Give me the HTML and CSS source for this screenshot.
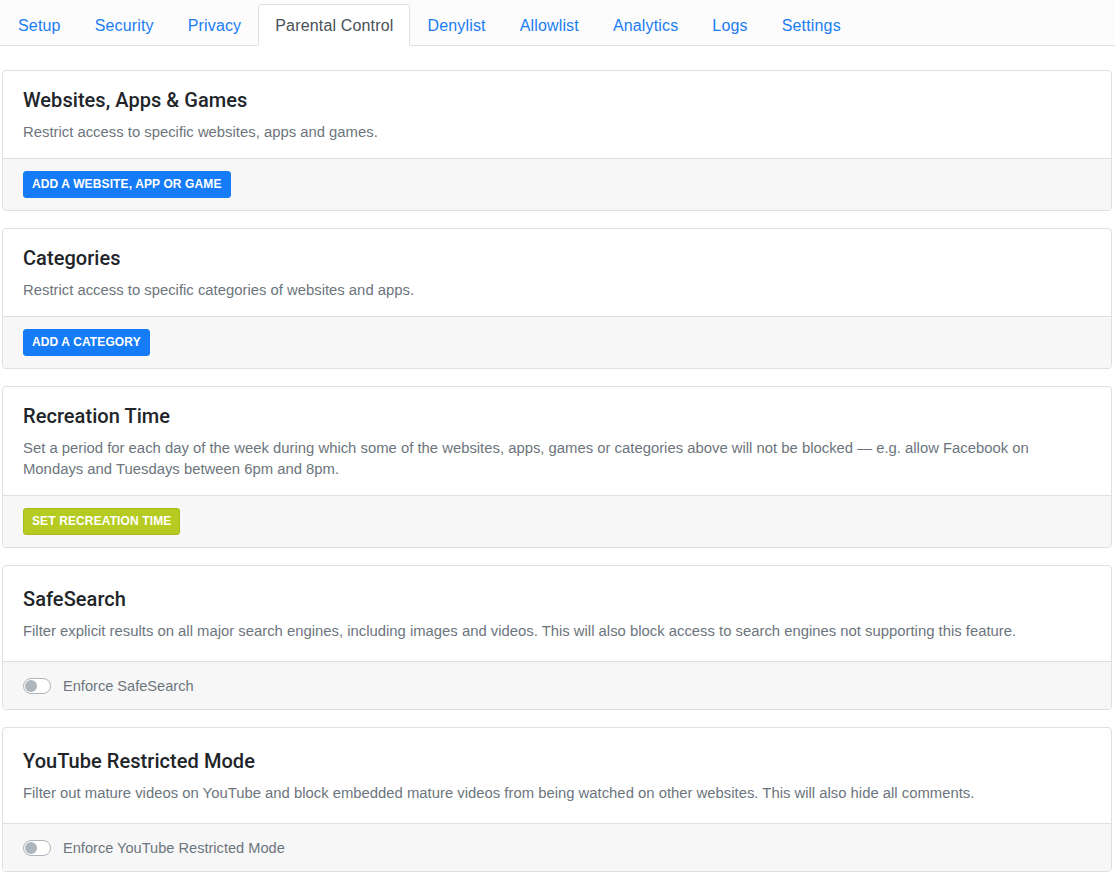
FILE: index.html
```html
<!DOCTYPE html>
<html lang="en">
<head>
<meta charset="utf-8">
<title>Parental Control</title>
<link rel="stylesheet" href="styles.css">
</head>
<body>
<nav class="tabs">
  <a class="tab" href="#">Setup</a>
  <a class="tab" href="#">Security</a>
  <a class="tab" href="#">Privacy</a>
  <a class="tab active" href="#">Parental Control</a>
  <a class="tab" href="#">Denylist</a>
  <a class="tab" href="#">Allowlist</a>
  <a class="tab" href="#">Analytics</a>
  <a class="tab" href="#">Logs</a>
  <a class="tab" href="#">Settings</a>
</nav>
<main class="content">
  <section class="card">
    <div class="card-body">
      <h5 class="card-title">Websites, Apps &amp; Games</h5>
      <p class="card-text">Restrict access to specific websites, apps and games.</p>
    </div>
    <div class="card-footer">
      <button class="btn btn-primary" type="button">Add a website, app or game</button>
    </div>
  </section>
  <section class="card">
    <div class="card-body">
      <h5 class="card-title">Categories</h5>
      <p class="card-text">Restrict access to specific categories of websites and apps.</p>
    </div>
    <div class="card-footer">
      <button class="btn btn-primary" type="button">Add a category</button>
    </div>
  </section>
  <section class="card">
    <div class="card-body">
      <h5 class="card-title">Recreation Time</h5>
      <p class="card-text">Set a period for each day of the week during which some of the websites, apps, games or categories above will not be blocked — e.g. allow Facebook on Mondays and Tuesdays between 6pm and 8pm.</p>
    </div>
    <div class="card-footer">
      <button class="btn btn-lime" type="button">Set recreation time</button>
    </div>
  </section>
  <section class="card">
    <div class="card-body roomy">
      <h5 class="card-title">SafeSearch</h5>
      <p class="card-text">Filter explicit results on all major search engines, including images and videos. This will also block access to search engines not supporting this feature.</p>
    </div>
    <div class="card-footer">
      <label class="switch-row"><span class="switch"></span><span>Enforce SafeSearch</span></label>
    </div>
  </section>
  <section class="card">
    <div class="card-body roomy">
      <h5 class="card-title">YouTube Restricted Mode</h5>
      <p class="card-text">Filter out mature videos on YouTube and block embedded mature videos from being watched on other websites. This will also hide all comments.</p>
    </div>
    <div class="card-footer">
      <label class="switch-row"><span class="switch"></span><span>Enforce YouTube Restricted Mode</span></label>
    </div>
  </section>
</main>
</body>
</html>
```

FILE: styles.css
```css
html, body {
  margin: 0;
  padding: 0;
}

body {
  font-family: "Liberation Sans", Arial, sans-serif;
  color: #212529;
  background: #ffffff;
}

.tabs {
  display: flex;
  padding: 4px 0 0 1px;
  border-bottom: 1px solid #dee2e6;
  background: #fcfcfc;
}

.tab {
  display: block;
  padding: 9px 16px 7px;
  font-size: 16px;
  letter-spacing: 0.16px;
  line-height: 24px;
  color: #1a7cf4;
  text-decoration: none;
  border: 1px solid transparent;
  border-top-left-radius: 4px;
  border-top-right-radius: 4px;
  margin-bottom: -1px;
}

.tab.active {
  color: #495057;
  background: #ffffff;
  border-color: #dee2e6 #dee2e6 #ffffff;
}

.content {
  display: flex;
  flex-direction: column;
  gap: 17px;
  padding: 24px 3px 0 2px;
}

.card {
  border: 1px solid #dfdfdf;
  border-radius: 4px;
  background: #ffffff;
  overflow: hidden;
}

.card-body {
  padding: 17px 20px 15px;
}

.card-body.roomy {
  padding: 21px 20px 19px;
}

.card-title {
  margin: 0 0 10px;
  font-family: Roboto, "Liberation Sans", sans-serif;
  font-size: 20px;
  letter-spacing: 0.05px;
  line-height: 24px;
  font-weight: 500;
  color: #212529;
}

.roomy .card-title {
  margin-bottom: 10px;
}

.card-text {
  margin: 0;
  font-size: 14.85px;
  line-height: 21px;
  color: #6c757d;
}

.card-footer {
  background: #f7f7f7;
  border-top: 1px solid #dfdfdf;
  padding: 12px 20px;
}

.btn {
  display: inline-block;
  vertical-align: top;
  font-family: "Liberation Sans", Arial, sans-serif;
  font-size: 12px;
  letter-spacing: 0.12px;
  font-weight: 700;
  line-height: 17px;
  text-transform: uppercase;
  color: #ffffff;
  padding: 4px 8px;
  border: 1px solid transparent;
  border-radius: 3px;
  cursor: pointer;
}

.btn-primary {
  background: #157bf6;
  border-color: #157bf6;
}

.btn-lime {
  background: #b6cb21;
  border-color: #a7bb1b;
}

.switch-row {
  display: flex;
  align-items: center;
  gap: 12px;
  height: 23px;
  font-size: 14.6px;
  color: #6c757d;
}

.switch {
  position: relative;
  box-sizing: border-box;
  width: 28px;
  height: 16px;
  border: 1px solid #adb5bd;
  border-radius: 8px;
  background: #ffffff;
}

.switch::after {
  content: "";
  position: absolute;
  left: 1px;
  top: 1px;
  width: 12px;
  height: 12px;
  border-radius: 50%;
  background: #adb5bd;
}
```
